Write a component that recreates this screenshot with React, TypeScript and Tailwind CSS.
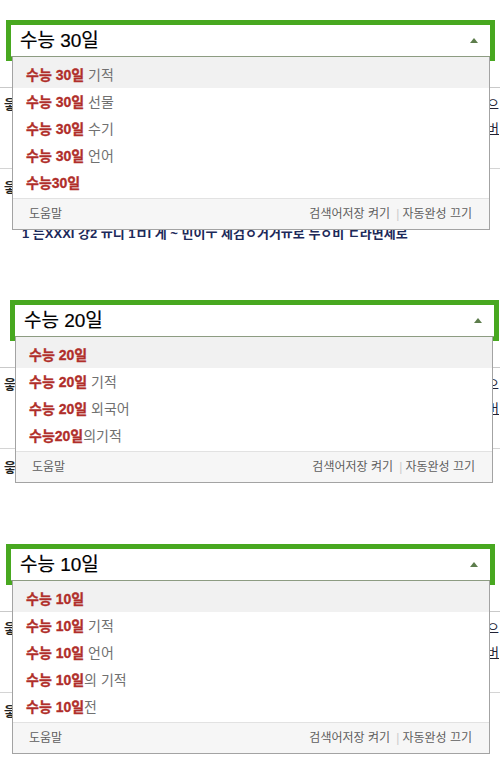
import React from 'react'

type Item = { hit: string; rest: string }

type PanelData = {
  query: string
  items: Item[]
  boxClass: string
  dropClass: string
  backClass: string
  tail: boolean
}

const panels: PanelData[] = [
  {
    query: '수능 30일',
    items: [
      { hit: '수능 30일', rest: ' 기적' },
      { hit: '수능 30일', rest: ' 선물' },
      { hit: '수능 30일', rest: ' 수기' },
      { hit: '수능 30일', rest: ' 언어' },
      { hit: '수능30일', rest: '' },
    ],
    boxClass: 'mt-[20px] ml-[6px]',
    dropClass: 'left-[12px]',
    backClass: 'h-[239px]',
    tail: true,
  },
  {
    query: '수능 20일',
    items: [
      { hit: '수능 20일', rest: '' },
      { hit: '수능 20일', rest: ' 기적' },
      { hit: '수능 20일', rest: ' 외국어' },
      { hit: '수능20일', rest: '의기적' },
    ],
    boxClass: 'ml-[10px]',
    dropClass: 'left-[15px]',
    backClass: 'h-[203px]',
    tail: false,
  },
  {
    query: '수능 10일',
    items: [
      { hit: '수능 10일', rest: '' },
      { hit: '수능 10일', rest: ' 기적' },
      { hit: '수능 10일', rest: ' 언어' },
      { hit: '수능 10일', rest: '의 기적' },
      { hit: '수능 10일', rest: '전' },
    ],
    boxClass: 'ml-[6px]',
    dropClass: 'left-[12px]',
    backClass: 'h-[200px]',
    tail: false,
  },
]

function SearchBox({ query, className }: { query: string; className: string }) {
  return (
    <div className={`${className} w-[489px] border-[5px] border-b-[4px] border-[#48a820] bg-white`}>
      <div className="flex h-[32px] items-center justify-between border-b border-[#8d9c82] pl-[9px] pr-[12px]">
        <span className="text-[19px] leading-none text-black [-webkit-text-stroke:0.2px_black]">{query}</span>
        <span className="h-0 w-0 border-x-[4px] border-b-[5px] border-x-transparent border-b-[#5d7d4c]" />
      </div>
    </div>
  )
}

function Suggestions({ items, className }: { items: Item[]; className: string }) {
  return (
    <div className={`absolute top-[-4px] ${className} z-10 w-[478px] border-x border-b border-[#a3a3a3] bg-white`}>
      <ul>
        {items.map((item, i) => (
          <li
            key={i}
            className={`flex items-center pl-[13px] text-[14px] leading-none ${
              i === 0 ? 'h-[31px] bg-[#f1f1f1] pt-[4px]' : 'h-[27px]'
            }`}
          >
            <b className="font-bold text-[#b02e2a] [-webkit-text-stroke:0.3px_#b02e2a]">{item.hit}</b>
            <span className="whitespace-pre text-[#707070]">{item.rest}</span>
          </li>
        ))}
      </ul>
      <div className="mt-[2px] flex h-[31px] items-center justify-between border-t border-[#e2e2e2] bg-[#f6f6f6] pl-[16px] pr-[17px] text-[12px] text-[#5e5e5e]">
        <span>도움말</span>
        <span>
          검색어저장 켜기 <span className="mx-[3px] text-[#ccc]">|</span>자동완성 끄기
        </span>
      </div>
    </div>
  )
}

// page fragments peeking out from behind the dropdown
function BackPage({ className, tail }: { className: string; tail: boolean }) {
  return (
    <div className={`${className} text-[13px] text-[#222]`}>
      <div className="h-[26px]" />
      <div className="border-t border-[#c9c9c9]" />
      <div className="flex h-[26px] items-end justify-between pl-[4px] pr-[1px]">
        <span className="font-bold">읗</span>
        <span className="text-[#223]">으</span>
      </div>
      <div className="flex h-[24px] items-end justify-end pr-[1px]">
        <span className="text-[#223] underline">버</span>
      </div>
      <div className="h-[30px]" />
      <div className="border-t border-[#d4d4d4]" />
      <div className="flex h-[28px] items-end pl-[4px]">
        <span className="font-bold">읗</span>
      </div>
      {tail && (
        <div className="mt-[30px] overflow-hidden whitespace-nowrap pl-[22px] text-[13px] leading-none text-[#1d2a5a]">
          <span className="font-bold">1 는XXXI 강2 ㅠ디 1ㅁI 게 ~ 민이ㅜ 제검ㅇ거거ㅠ로 누ㅇ비 ㄷ라면제로</span>
        </div>
      )}
    </div>
  )
}

export default function App() {
  return (
    <div className="h-[772px] w-[500px] overflow-hidden bg-white font-['Liberation_Sans','Noto_Sans_CJK_KR',sans-serif]">
      {panels.map((p) => (
        <section key={p.query}>
          <SearchBox query={p.query} className={p.boxClass} />
          <div className="relative">
            <Suggestions items={p.items} className={p.dropClass} />
            <BackPage className={p.backClass} tail={p.tail} />
          </div>
        </section>
      ))}
    </div>
  )
}
